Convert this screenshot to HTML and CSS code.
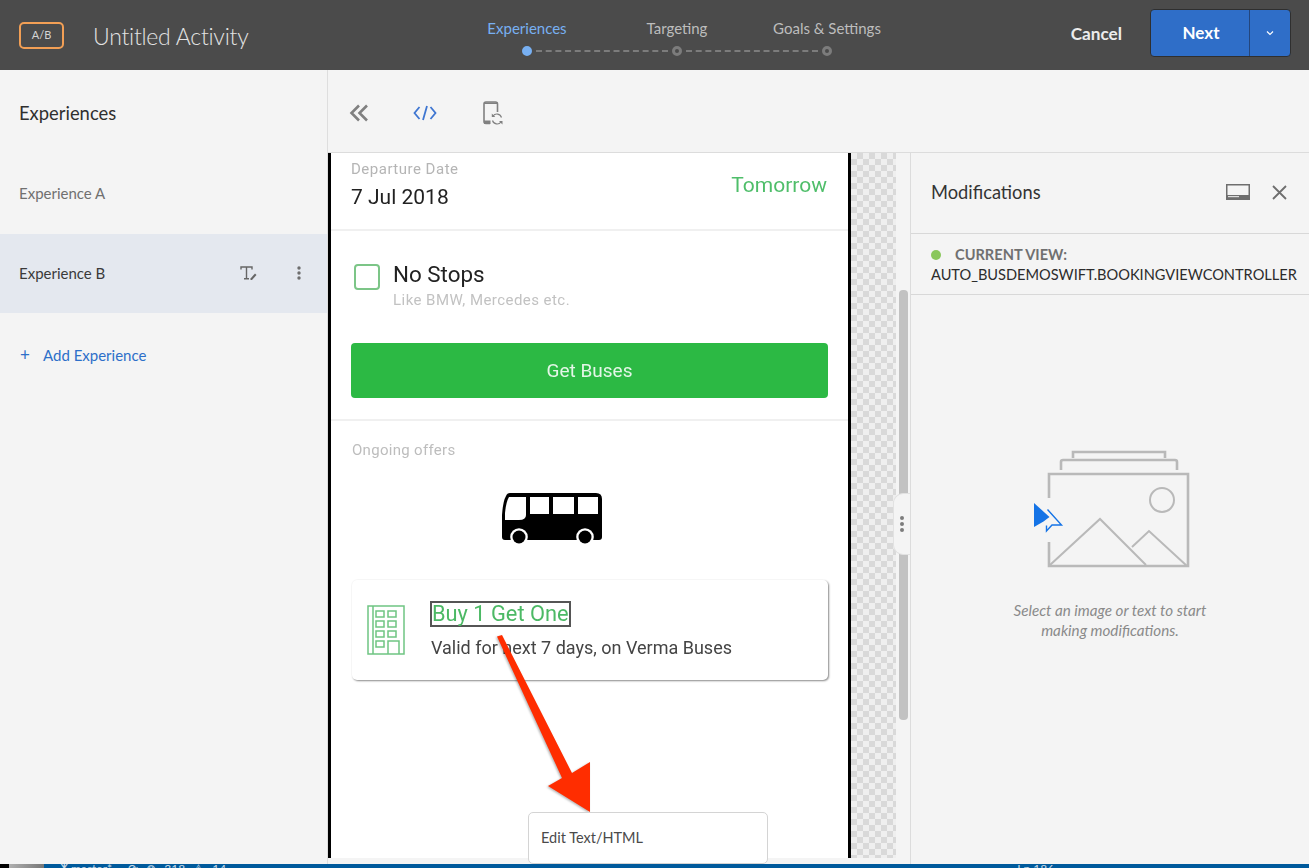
FILE: index.html
```html
<!DOCTYPE html>
<html lang="en">

<head>
    <meta charset="UTF-8">
    <meta name="viewport" content="width=device-width, initial-scale=1.0">
    <title>Untitled Activity</title>
    <link rel="stylesheet" href="styles.css">
</head>

<body>
    <div class="app">

        <header class="topbar">
            <div class="activity">
                <span class="ab-badge">A/B</span>
                <span class="activity-title">Untitled Activity</span>
            </div>
            <nav class="steps">
                <div class="step-labels">
                    <span class="step-label active">Experiences</span>
                    <span class="step-label">Targeting</span>
                    <span class="step-label">Goals &amp; Settings</span>
                </div>
                <div class="step-track">
                    <span class="dot active"></span>
                    <span class="dash"></span>
                    <span class="dot"></span>
                    <span class="dash"></span>
                    <span class="dot"></span>
                </div>
            </nav>
            <div class="actions">
                <span class="cancel">Cancel</span>
                <div class="next-btn">
                    <span class="next-label">Next</span>
                    <span class="next-more">
                        <svg width="8" height="6" viewBox="0 0 8 6"><path d="M1 1.500l3 3 3-3" fill="none" stroke="#fff" stroke-width="1.200"/></svg>
                    </span>
                </div>
            </div>
        </header>

        <div class="workspace">
            <aside class="sidebar">
                <h2 class="sidebar-title">Experiences</h2>
                <div class="exp-row">Experience A</div>
                <div class="exp-row selected">
                    <span>Experience B</span>
                    <span class="exp-tools">
                        <svg width="17" height="14" viewBox="0 0 17 14">
                            <path d="M1 3.500V1h11v2.500M6.500 1v11.500M4 12.700h5" fill="none" stroke="#666" stroke-width="1.400"/>
                            <path d="M10.500 12.500l4.500-5 1.500 1.400-4.500 5h-1.500z" fill="#666"/>
                        </svg>
                        <svg width="4" height="14" viewBox="0 0 4 14">
                            <circle cx="2" cy="2" r="1.700" fill="#6e6e6e"/>
                            <circle cx="2" cy="7" r="1.700" fill="#6e6e6e"/>
                            <circle cx="2" cy="12" r="1.700" fill="#6e6e6e"/>
                        </svg>
                    </span>
                </div>
                <div class="add-exp"><span class="plus">+</span>Add Experience</div>
            </aside>

            <main class="editor">
                <div class="toolbar">
                    <svg width="20" height="18" viewBox="0 0 20 18"><path d="M10 1.500L2.500 9l7.500 7.500M18 1.500L10.500 9l7.500 7.500" fill="none" stroke="#808080" stroke-width="2.600"/></svg>
                    <svg width="24" height="16" viewBox="0 0 24 16"><path d="M6.500 2L1.500 8l5 6M17.500 2l5 6-5 6M14 1l-4 14" fill="none" stroke="#3f76d1" stroke-width="1.800"/></svg>
                    <svg class="device-icon" width="20" height="24" viewBox="0 0 20 24">
                        <path d="M7 22.500H3a2 2 0 0 1-2-2V3a2 2 0 0 1 2-2h9.500a2 2 0 0 1 2 2v8" fill="none" stroke="#808080" stroke-width="1.600"/>
                        <path d="M1 1.500h13.500v1.500H1zM1 19.500h6.500v3.500H1z" fill="#808080"/>
                        <path d="M18.500 16.500a4.800 4.800 0 0 0-8.500-1.500M9.500 19.500a4.800 4.800 0 0 0 8.500 1.500" fill="none" stroke="#808080" stroke-width="1.200"/>
                        <path d="M8.800 12.500v3.500h3.500zM19.500 23.500V20H16z" fill="#808080"/>
                    </svg>
                </div>

                <div class="editor-body">
                    <section class="canvas">
                        <div class="phone">
                            <div class="date-row">
                                <div>
                                    <div class="date-label">Departure Date</div>
                                    <div class="date-value">7 Jul 2018</div>
                                </div>
                                <div class="date-hint">Tomorrow</div>
                            </div>

                            <div class="filter-block">
                                <div class="stops">
                                    <span class="checkbox"></span>
                                    <div>
                                        <div class="stops-title">No Stops</div>
                                        <div class="stops-sub">Like BMW, Mercedes etc.</div>
                                    </div>
                                </div>
                                <div class="get-buses">Get Buses</div>
                            </div>

                            <div class="offers">
                                <div class="offers-label">Ongoing offers</div>
                                <svg class="bus" width="101" height="52" viewBox="0 0 101 52">
                                    <path d="M8 0h86q6 0 6 6v38q0 3-3 3H3q-3 0-3-3V22Q1 8 4 3q1-3 4-3z" fill="#000"/>
                                    <path d="M7 4h17v18q0 5-7 5H3V20Q4 9 7 4z" fill="#fff"/>
                                    <rect x="28" y="4" width="19" height="17" fill="#fff"/>
                                    <rect x="51" y="4" width="21" height="17" fill="#fff"/>
                                    <rect x="76" y="4" width="20" height="17" fill="#fff"/>
                                    <circle cx="17" cy="44" r="8.800" fill="#fff"/>
                                    <circle cx="17" cy="44" r="6.500" fill="#000"/>
                                    <circle cx="83" cy="44" r="8.800" fill="#fff"/>
                                    <circle cx="83" cy="44" r="6.500" fill="#000"/>
                                </svg>
                                <div class="offer-card">
                                    <svg class="offer-icon" width="38" height="50" viewBox="0 0 38 50" fill="none" stroke="#6fc582" stroke-width="1.500">
                                        <rect x="1" y="1" width="36" height="48"/>
                                        <rect x="9" y="6" width="8" height="6"/><rect x="21" y="6" width="8" height="6"/>
                                        <rect x="9" y="16" width="8" height="6"/><rect x="21" y="16" width="8" height="6"/>
                                        <rect x="9" y="26" width="8" height="6"/><rect x="21" y="26" width="8" height="6"/>
                                        <rect x="9" y="36" width="8" height="6"/>
                                        <path d="M21 49V36h11v13M6 1v48"/>
                                    </svg>
                                    <div>
                                        <div class="offer-title">Buy 1 Get One</div>
                                        <div class="offer-sub">Valid for next 7 days, on Verma Buses</div>
                                    </div>
                                </div>
                            </div>
                        </div>
                        <div class="checker"></div>
                        <div class="scroll-track"><div class="scroll-thumb"></div></div>
                        <div class="grip"><i></i><i></i><i></i></div>
                    </section>

                    <aside class="panel">
                        <div class="panel-head">
                            <h2 class="panel-title">Modifications</h2>
                            <svg width="24" height="16" viewBox="0 0 24 16">
                                <rect x="0.750" y="0.750" width="22.500" height="14.500" fill="none" stroke="#6e6e6e" stroke-width="1.500"/>
                                <rect x="1" y="11" width="22" height="4" fill="#6e6e6e"/>
                                <rect x="2" y="12" width="11" height="1.200" fill="#ddd"/>
                            </svg>
                            <svg class="panel-close" width="15" height="15" viewBox="0 0 15 15"><path d="M1 1l13 13M14 1L1 14" stroke="#6e6e6e" stroke-width="1.800"/></svg>
                        </div>
                        <div class="view-info">
                            <div class="view-label"><span class="view-dot"></span>CURRENT VIEW:</div>
                            <div class="view-name">AUTO_BUSDEMOSWIFT.BOOKINGVIEWCONTROLLER</div>
                        </div>
                        <div class="empty">
                            <svg class="empty-art" width="160" height="120" viewBox="0 0 160 120" fill="none" stroke="#b9b9b9" stroke-width="2.600">
                                <path d="M40 10V4h92v6M28 22v-8q0-2 2-2h112q2 0 2 2v8"/>
                                <path d="M16 50V26h139v92H16V94"/>
                                <circle cx="129" cy="52" r="12" stroke-width="2"/>
                                <path d="M17 117l50-46 46 46M99 99l17-16 38 35" stroke-width="2"/>
                                <path d="M1 55l15.500 14-6 4.500L1 79z" fill="#1473e6" stroke="none"/>
                                <path d="M14.500 61.500L28.500 77H19l-5.500 6v-5.500" stroke="#1473e6" stroke-width="1.400"/>
                            </svg>
                            <p class="empty-text">Select an image or text to start<br>making modifications.</p>
                        </div>
                    </aside>
                </div>
            </main>
        </div>

        <footer class="statusbar">
            <span class="status-corner"></span>
            <span class="status-text">ⵅ master*</span>
            <span class="status-text status-counts">⟳ ⊗ 318 ⚠ 14</span>
            <span class="status-text status-right">Ln 186</span>
        </footer>

        <!-- callout over the screenshot -->
        <svg class="callout" width="110" height="190" viewBox="0 0 110 190">
            <path d="M7 6.500L12 5l70 138 18-11 0 50-42-26 14-8z" fill="#ff2d00"/>
        </svg>
        <div class="edit-menu">Edit Text/HTML</div>
    </div>
</body>

</html>
```

FILE: styles.css
```css
* {
    box-sizing: border-box;
}

body {
    margin: 0;
    font-family: Lato, "Open Sans", sans-serif;
    color: #2c2c2c;
    background: #f4f4f4;
}

.app {
    position: relative;
    display: flex;
    flex-direction: column;
    height: 868px;
    overflow: hidden;
}

/* top bar */
.topbar {
    display: flex;
    flex: 0 0 70px;
    background: #4b4b4b;
    color: #e6e6e6;
}

.activity {
    display: flex;
    align-items: center;
    flex: 0 0 452px;
    padding-left: 19px;
}

.ab-badge {
    width: 45px;
    height: 27px;
    margin-right: 29px;
    border: 2.500px solid #f29f55;
    border-radius: 5px;
    font-size: 11px;
    line-height: 22px;
    text-align: center;
    color: #d5d5d5;
}

.activity-title {
    margin-top: 2px;
    font-size: 23px;
    font-weight: 300;
    letter-spacing: -0.250px;
    color: #e3e3e3;
}

.steps {
    flex: 0 0 450px;
}

.step-labels {
    display: grid;
    grid-template-columns: repeat(3, 150px);
    padding-top: 18px;
    text-align: center;
    font-size: 15px;
    line-height: 20px;
    color: #bdbdbd;
}

.step-label.active {
    color: #78b0f2;
}

.step-track {
    display: flex;
    align-items: center;
    gap: 4px;
    height: 10px;
    margin-top: 8px;
    padding: 0 70px;
}

.dot {
    flex: 0 0 10px;
    height: 10px;
    border: 3px solid #7c7c7c;
    border-radius: 50%;
}

.dot.active {
    background: #78b0f2;
    border-color: #78b0f2;
}

.dash {
    flex: 1;
    border-top: 2px dashed #7c7c7c;
}

.actions {
    display: flex;
    align-items: center;
    justify-content: flex-end;
    flex: 1;
    padding: 0 18px 4px 0;
}

.cancel {
    margin-right: 28px;
    font-size: 17.200px;
    font-weight: 700;
    color: #ececec;
}

.next-btn {
    display: flex;
    width: 141px;
    height: 48px;
    border: 1px solid #2f2f2f;
    border-radius: 4px;
    background: #2f6ec8;
    font-size: 17px;
    font-weight: 700;
    color: #fff;
}

.next-label {
    flex: 0 0 99px;
    padding-left: 2px;
    line-height: 46px;
    text-align: center;
    border-right: 1px solid #24467c;
}

.next-more {
    display: flex;
    align-items: center;
    justify-content: center;
    flex: 1;
}

/* left column */
.workspace {
    display: flex;
    flex: 1;
    min-height: 0;
}

.sidebar {
    flex: 0 0 328px;
    border-right: 1px solid #dedede;
    border-bottom-left-radius: 6px;
}

.sidebar-title {
    margin: 0;
    padding: 31px 19px 0;
    height: 83px;
    font-size: 18.400px;
    line-height: 24px;
    font-weight: 400;
    color: #2f2f2f;
}

.exp-row {
    display: flex;
    align-items: center;
    justify-content: space-between;
    height: 81px;
    padding: 0 26px 2px 19px;
    font-size: 15px;
    color: #707070;
}

.exp-row.selected {
    height: 79px;
    background: #e4e8ef;
    color: #3a3a3a;
}

.exp-tools {
    display: flex;
    align-items: center;
    gap: 40px;
}

.add-exp {
    padding: 32px 19px 0 20px;
    font-size: 15px;
    line-height: 20px;
    color: #2d6fc9;
}

.plus {
    display: inline-block;
    width: 23px;
    font-size: 17px;
}

/* editor */
.editor {
    display: flex;
    flex-direction: column;
    flex: 1;
    min-width: 0;
}

.toolbar {
    display: flex;
    align-items: center;
    flex: 0 0 83px;
    padding: 4px 0 0 21px;
    gap: 44px;
    border-bottom: 1px solid #dcdcdc;
}

.device-icon {
    margin-left: 2px;
}

.editor-body {
    display: flex;
    flex: 1;
    min-height: 0;
}

.canvas {
    position: relative;
    display: flex;
    flex: 0 0 583px;
    padding-bottom: 6px;
    border-right: 1px solid #dcdcdc;
}

.phone {
    flex: 0 0 523px;
    border-left: 3px solid #000;
    border-right: 3px solid #000;
    background: #fff;
    font-family: Roboto, "Liberation Sans", sans-serif;
}

/* the phone picture is a scaled up screenshot, so its text is soft */
.date-row,
.filter-block,
.offers {
    filter: blur(0.400px);
}

.date-row {
    display: flex;
    justify-content: space-between;
    height: 78px;
    padding: 7px 21px 0 20px;
    border-bottom: 2px solid #f0f0f0;
}

.date-label {
    font-size: 15px;
    letter-spacing: 0.500px;
    line-height: 18px;
    color: #b5b5b5;
}

.date-value {
    margin-top: 6px;
    font-size: 21px;
    line-height: 26px;
    color: #222;
}

.date-hint {
    margin-top: 13px;
    font-size: 21px;
    line-height: 24px;
    color: #4fbe6a;
}

.filter-block {
    height: 190px;
    padding: 33px 20px 0 20px;
    border-bottom: 2px solid #f0f0f0;
}

.stops {
    display: flex;
    height: 79px;
}

.checkbox {
    flex: 0 0 26px;
    height: 26px;
    margin: 0 13px 0 3px;
    border: 2px solid #7cc587;
    border-radius: 4px;
}

.stops-title {
    margin-top: -3px;
    font-size: 22.400px;
    line-height: 26px;
    color: #222;
}

.stops-sub {
    margin-top: 4px;
    font-size: 15px;
    letter-spacing: 0.450px;
    line-height: 18px;
    color: #c2c2c2;
}

.get-buses {
    height: 55px;
    border-radius: 4px;
    background: #2cb944;
    font-size: 19px;
    line-height: 56px;
    text-align: center;
    color: #e4f6e7;
}

.offers {
    padding: 19px 20px 0 21px;
}

.offers-label {
    font-size: 15px;
    letter-spacing: 0.300px;
    line-height: 20px;
    color: #bdbdbd;
}

.bus {
    display: block;
    margin: 33px 0 35px 150px;
}

.offer-card {
    display: flex;
    height: 100px;
    padding: 21px 0 0 15px;
    border-radius: 5px;
    box-shadow: 1px 1px 2px #8a8a8a, 0 0 2px #f4f4f4;
}

.offer-icon {
    flex: 0 0 38px;
    margin: 4px 25px 0 0;
}

.offer-title {
    display: inline-block;
    height: 26px;
    padding: 0;
    border: 2px solid #555;
    font-size: 21.800px;
    line-height: 22px;
    color: #4cb965;
}

.offer-sub {
    margin: 10px 0 0 1px;
    font-size: 18px;
    line-height: 22px;
    color: #444;
}

.checker {
    flex: 0 0 45px;
    background: repeating-conic-gradient(#d9d9d9 0 25%, #efefef 0 50%) 0 0 / 12px 12px;
}

.scroll-track {
    flex: 0 0 14px;
    padding: 137px 2px 0 3px;
}

.scroll-thumb {
    height: 430px;
    background: #c2c2c2;
    border-radius: 4px;
}

.grip {
    position: absolute;
    top: 340px;
    right: 0;
    display: flex;
    flex-direction: column;
    align-items: center;
    justify-content: center;
    gap: 2px;
    width: 17px;
    height: 62px;
    background: #f4f4f4;
    border: 1px solid #e2e2e2;
    border-right: 0;
    border-radius: 10px 0 0 10px;
}

.grip i {
    width: 4px;
    height: 4px;
    border-radius: 50%;
    background: #7c7c7c;
}

/* right panel */
.panel {
    flex: 1;
    min-width: 0;
}

.panel-head {
    display: flex;
    align-items: center;
    height: 81px;
    padding: 0 22px 2px 20px;
    border-bottom: 1px solid #d8d8d8;
}

.panel-title {
    flex: 1;
    margin: 0;
    font-size: 18.300px;
    font-weight: 400;
    color: #333;
}

.panel-close {
    margin-left: 22px;
}

.view-info {
    height: 61px;
    padding: 11px 0 0 20px;
    border-bottom: 1px solid #d8d8d8;
    font-size: 14.600px;
    line-height: 20px;
}

.view-label {
    font-weight: 700;
    color: #707070;
}

.view-dot {
    display: inline-block;
    width: 10px;
    height: 10px;
    margin-right: 14px;
    border-radius: 50%;
    background: #8ac75c;
}

.view-name {
    color: #2c2c2c;
    white-space: nowrap;
}

.empty {
    padding-top: 153px;
    text-align: center;
}

.empty-art {
    display: block;
    margin: 0 0 0 122px;
}

.empty-text {
    margin: 32px 0 0;
    font-size: 15.200px;
    font-style: italic;
    line-height: 20px;
    color: #8a8a8a;
}

/* window bottom */
.statusbar {
    display: flex;
    flex: 0 0 4px;
    gap: 16px;
    overflow: hidden;
    background: #005a9c;
    font-size: 12px;
    line-height: 12px;
    color: #c9d9e6;
}

.status-corner {
    flex: 0 0 44px;
    background: linear-gradient(90deg, #000 9px, #b0b0b0 9px, #777);
}

.status-text {
    margin-top: -1px;
}

.status-counts {
    word-spacing: 5px;
}

.status-right {
    margin-left: 775px;
}

/* things lying over the page */
.callout {
    position: absolute;
    left: 490px;
    top: 630px;
    filter: drop-shadow(-1px 1px 1px rgba(0, 0, 0, 0.3));
}

.edit-menu {
    position: absolute;
    left: 528px;
    top: 812px;
    width: 240px;
    height: 52px;
    padding-left: 12px;
    border: 1px solid #d4d4d4;
    border-radius: 5px;
    background: #fff;
    font-size: 14.500px;
    line-height: 50px;
    color: #4a4a4a;
}
```
